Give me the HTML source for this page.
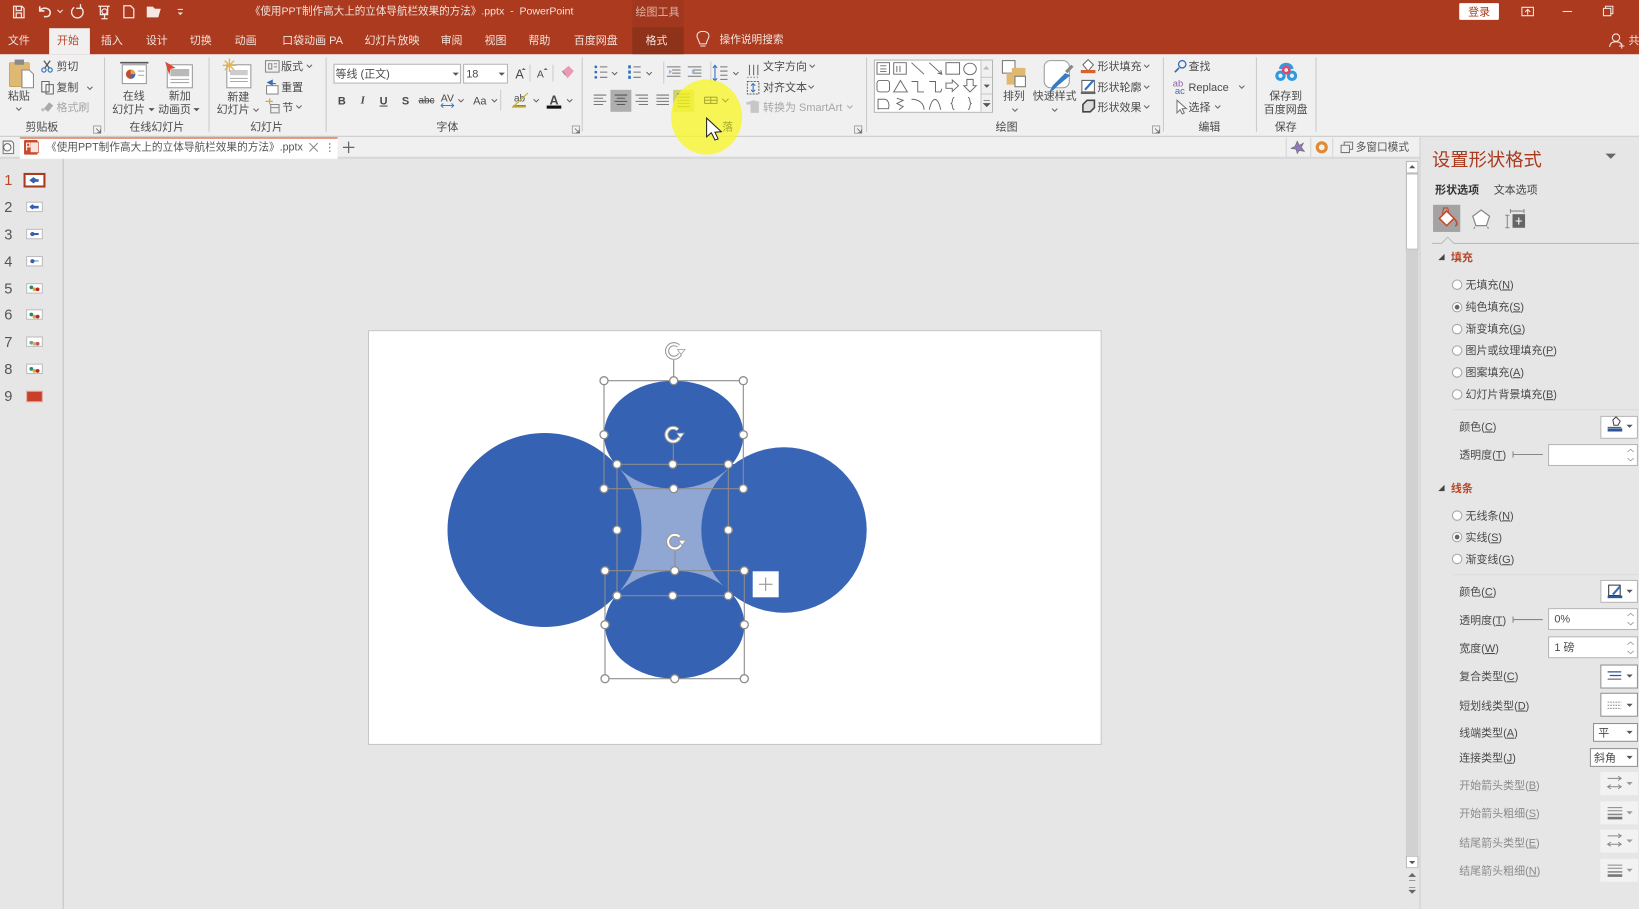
<!DOCTYPE html>
<html lang="zh"><head><meta charset="utf-8"><title>PowerPoint</title>
<style>
html,body{margin:0;padding:0;width:1639px;height:909px;overflow:hidden;background:#e6e6e6}
body{font-family:"Liberation Sans","Noto Sans CJK SC",sans-serif;font-size:10.5px;color:#4a4a4a}
#r{position:absolute;left:0;top:0;width:1568px;height:870px;transform:scale(1.04528,1.04483);transform-origin:0 0;overflow:hidden;filter:blur(.35px)}
.b{position:absolute}
.t{position:absolute;white-space:nowrap;line-height:14px;height:14px;margin-top:-6.5px}
.c{transform:translateX(-50%)}
.w{color:#f3e3dd}
.g{color:#a6a6a6}
.m{color:#8a8a8a}
.u{text-decoration:underline}
.inp{position:absolute;background:#fff;border:1px solid #b5b5b5;box-sizing:border-box}
.num{font-size:14px;color:#555}
svg{position:absolute;left:0;top:0;overflow:visible}
</style></head><body>
<div id="r">
<!-- backgrounds -->
<div class="b" style="left:0;top:0;width:1568px;height:52px;background:#ab3a1f"></div>
<div class="b" style="left:605px;top:0;width:49px;height:52px;background:#a0371e"></div>
<div class="b" style="left:605px;top:26px;width:49px;height:26px;background:#8e3319"></div>
<div class="b" style="left:47px;top:27px;width:39px;height:25px;background:#f0f0f0"></div>
<div class="b" style="left:0;top:52px;width:1568px;height:78px;background:#f0f0f0"></div>
<div class="b" style="left:0;top:130px;width:1568px;height:1px;background:#c9c9c9"></div>
<div class="b" style="left:0;top:131px;width:1568px;height:20px;background:#f0f0f0"></div>
<div class="b" style="left:0;top:150px;width:1360px;height:2px;background:#d8d8d8"></div>
<div class="b" style="left:19px;top:131px;width:304px;height:21px;background:#fff;border-top:2px solid #e09a80;box-sizing:border-box"></div>
<div class="b" style="left:60px;top:152px;width:1px;height:718px;background:#c4c4c4"></div>
<div class="b" style="left:1345px;top:154px;width:12px;height:716px;background:#d1d1d1"></div>
<div class="b" style="left:1345px;top:166px;width:12px;height:73px;background:#fff;border:1px solid #b9b9b9;box-sizing:border-box"></div>
<div class="b" style="left:1345px;top:154px;width:12px;height:12px;background:#fff;border:1px solid #b9b9b9;box-sizing:border-box"></div>
<div class="b" style="left:1345px;top:819px;width:12px;height:12px;background:#fff;border:1px solid #b9b9b9;box-sizing:border-box"></div>
<div class="b" style="left:1345px;top:831px;width:12px;height:39px;background:#e6e6e6"></div>
<div class="b" style="left:1358px;top:131px;width:210px;height:739px;background:#e6e6e6;border-left:1px solid #d0d0d0;box-sizing:border-box"></div>

<!-- title bar text -->
<div class="t w" style="left:239px;top:11px;font-size:10.1px">《使用PPT制作高大上的立体导航栏效果的方法》.pptx&nbsp; -&nbsp; PowerPoint</div>
<div class="t c" style="left:629px;top:11px;color:#e2b3a4">绘图工具</div>
<div class="b" style="left:1396px;top:3px;width:38px;height:16px;background:#fff;border-radius:1px"></div>
<div class="t c" style="left:1415px;top:11.500px;color:#a93a1e">登录</div>
<div class="t w" style="left:1558px;top:38px">共享</div>

<!-- tabs -->
<div class="t c w" style="left:18px;top:38px">文件</div>
<div class="t c" style="left:65px;top:38px;color:#b7472a">开始</div>
<div class="t c w" style="left:107px;top:38px">插入</div>
<div class="t c w" style="left:150px;top:38px">设计</div>
<div class="t c w" style="left:192px;top:38px">切换</div>
<div class="t c w" style="left:235px;top:38px">动画</div>
<div class="t c w" style="left:299px;top:38px">口袋动画 PA</div>
<div class="t c w" style="left:375px;top:38px">幻灯片放映</div>
<div class="t c w" style="left:432px;top:38px">审阅</div>
<div class="t c w" style="left:474px;top:38px">视图</div>
<div class="t c w" style="left:516px;top:38px">帮助</div>
<div class="t c w" style="left:570px;top:38px">百度网盘</div>
<div class="t c w" style="left:628px;top:38px">格式</div>
<div class="t c w" style="left:719px;top:38px;font-size:10.2px">操作说明搜索</div>

<!-- clipboard -->
<div class="t c" style="left:18px;top:91px">粘贴</div>
<div class="t" style="left:54px;top:63px">剪切</div>
<div class="t" style="left:54px;top:83px">复制</div>
<div class="t g" style="left:54px;top:102px">格式刷</div>
<div class="t c" style="left:128px;top:91px">在线</div>
<div class="t c" style="left:123px;top:104px">幻灯片</div>
<div class="t c" style="left:172px;top:91px">新加</div>
<div class="t c" style="left:167px;top:104px">动画页</div>
<div class="t c" style="left:228px;top:92px">新建</div>
<div class="t c" style="left:223px;top:104px">幻灯片</div>
<div class="t" style="left:269px;top:63px">版式</div>
<div class="t" style="left:269px;top:83px">重置</div>
<div class="t" style="left:270px;top:102px">节</div>
<div class="inp" style="left:319px;top:61px;width:122px;height:19px"></div>
<div class="inp" style="left:443px;top:61px;width:43px;height:19px"></div>
<div class="t" style="left:321px;top:70px">等线 (正文)</div>
<div class="t" style="left:446px;top:70px">18</div>
<div class="t c" style="left:327px;top:96px;font-weight:bold">B</div>
<div class="t c" style="left:347px;top:96px;font-style:italic;font-family:'Liberation Serif',serif;font-weight:bold">I</div>
<div class="t c u" style="left:367px;top:96px;font-weight:bold">U</div>
<div class="t c" style="left:388px;top:96px;font-weight:bold">S</div>
<div class="t c" style="left:408px;top:96px;text-decoration:line-through;font-size:9.5px">abc</div>
<div class="t c" style="left:428px;top:94px;font-size:10px">AV</div>
<div class="t c" style="left:459px;top:96px">Aa</div>
<div class="t c" style="left:497px;top:70px;font-size:12px">A</div>
<div class="t c" style="left:517px;top:71px;font-size:10px">A</div>
<div class="t c" style="left:497px;top:94px;font-size:9.5px">ab</div>
<div class="t c" style="left:530px;top:95px;font-weight:bold;font-size:12px">A</div>

<!-- paragraph -->
<div class="t" style="left:730px;top:63px">文字方向</div>
<div class="t" style="left:730px;top:83px">对齐文本</div>
<div class="t g" style="left:730px;top:102px">转换为 SmartArt</div>
<div class="b" style="left:584px;top:86px;width:20px;height:21px;background:#aeaeae"></div>
<div class="b" style="left:644px;top:86px;width:20px;height:21px;background:#cfd06a"></div>

<!-- drawing -->
<div class="b" style="left:836px;top:57px;width:114px;height:51px;background:#fff;border:1px solid #b5b5b5;box-sizing:border-box"></div>
<div class="b" style="left:938px;top:58px;width:11px;height:49px;background:#f0f0f0;border-left:1px solid #c5c5c5;box-sizing:border-box"></div>
<div class="t c" style="left:970px;top:91px">排列</div>
<div class="t c" style="left:1009px;top:91px">快速样式</div>
<div class="t" style="left:1050px;top:63px">形状填充</div>
<div class="t" style="left:1050px;top:83px">形状轮廓</div>
<div class="t" style="left:1050px;top:102px">形状效果</div>

<!-- edit, save -->
<div class="t" style="left:1137px;top:63px">查找</div>
<div class="t" style="left:1137px;top:83px">Replace</div>
<div class="t" style="left:1137px;top:102px">选择</div>
<div class="t c" style="left:1230px;top:91px">保存到</div>
<div class="t c" style="left:1230px;top:104px">百度网盘</div>

<!-- group labels -->
<div class="t c" style="left:40px;top:121px">剪贴板</div>
<div class="t c" style="left:150px;top:121px">在线幻灯片</div>
<div class="t c" style="left:255px;top:121px">幻灯片</div>
<div class="t c" style="left:428px;top:121px">字体</div>
<div class="t c" style="left:963px;top:121px">绘图</div>
<div class="t c" style="left:1157px;top:121px">编辑</div>
<div class="t c" style="left:1230px;top:121px">保存</div>

<!-- doc tab -->
<div class="t" style="left:44px;top:141px;color:#555;font-size:10.2px">《使用PPT制作高大上的立体导航栏效果的方法》.pptx</div>
<div class="t" style="left:1297px;top:141px;color:#555;font-size:10.2px">多窗口模式</div>

<!-- slide numbers -->
<div class="t c num" style="left:8px;top:171px;color:#b7472a">1</div>
<div class="t c num" style="left:8px;top:197px">2</div>
<div class="t c num" style="left:8px;top:223px">3</div>
<div class="t c num" style="left:8px;top:249px">4</div>
<div class="t c num" style="left:8px;top:275px">5</div>
<div class="t c num" style="left:8px;top:300px">6</div>
<div class="t c num" style="left:8px;top:326px">7</div>
<div class="t c num" style="left:8px;top:352px">8</div>
<div class="t c num" style="left:8px;top:378px">9</div>

<!-- right pane -->
<div class="t" style="left:1370px;top:153px;font-size:17.5px;color:#a93a1e;line-height:20px;height:20px;margin-top:-10px">设置形状格式</div>
<div class="t" style="left:1373px;top:181px;font-weight:bold;color:#333">形状选项</div>
<div class="t" style="left:1429px;top:181px;color:#444">文本选项</div>
<div class="b" style="left:1371px;top:196px;width:26px;height:26px;background:#a3a3a3"></div>
<div class="t" style="left:1388px;top:246px;color:#b7472a;font-weight:bold">填充</div>
<div class="t" style="left:1402px;top:272px">无填充(<span class="u">N</span>)</div>
<div class="t" style="left:1402px;top:293px">纯色填充(<span class="u">S</span>)</div>
<div class="t" style="left:1402px;top:314px">渐变填充(<span class="u">G</span>)</div>
<div class="t" style="left:1402px;top:335px">图片或纹理填充(<span class="u">P</span>)</div>
<div class="t" style="left:1402px;top:356px">图案填充(<span class="u">A</span>)</div>
<div class="t" style="left:1402px;top:377px">幻灯片背景填充(<span class="u">B</span>)</div>
<div class="t" style="left:1396px;top:408px">颜色(<span class="u">C</span>)</div>
<div class="t" style="left:1396px;top:435px">透明度(<span class="u">T</span>)</div>
<div class="inp" style="left:1531px;top:398px;width:36px;height:22px;background:#fff"></div>
<div class="inp" style="left:1481px;top:425px;width:86px;height:21px"></div>
<div class="t" style="left:1388px;top:467px;color:#b7472a;font-weight:bold">线条</div>
<div class="t" style="left:1402px;top:493px">无线条(<span class="u">N</span>)</div>
<div class="t" style="left:1402px;top:514px">实线(<span class="u">S</span>)</div>
<div class="t" style="left:1402px;top:535px">渐变线(<span class="u">G</span>)</div>
<div class="t" style="left:1396px;top:566px">颜色(<span class="u">C</span>)</div>
<div class="t" style="left:1396px;top:593px">透明度(<span class="u">T</span>)</div>
<div class="t" style="left:1396px;top:620px">宽度(<span class="u">W</span>)</div>
<div class="t" style="left:1396px;top:647px">复合类型(<span class="u">C</span>)</div>
<div class="t" style="left:1396px;top:675px">短划线类型(<span class="u">D</span>)</div>
<div class="t" style="left:1396px;top:701px">线端类型(<span class="u">A</span>)</div>
<div class="t" style="left:1396px;top:725px">连接类型(<span class="u">J</span>)</div>
<div class="t m" style="left:1396px;top:751px">开始箭头类型(<span class="u">B</span>)</div>
<div class="t m" style="left:1396px;top:778px">开始箭头粗细(<span class="u">S</span>)</div>
<div class="t m" style="left:1396px;top:806px">结尾箭头类型(<span class="u">E</span>)</div>
<div class="t m" style="left:1396px;top:833px">结尾箭头粗细(<span class="u">N</span>)</div>
<div class="inp" style="left:1531px;top:555px;width:36px;height:22px"></div>
<div class="inp" style="left:1481px;top:582px;width:86px;height:21px"></div>
<div class="inp" style="left:1481px;top:609px;width:86px;height:21px"></div>
<div class="inp" style="left:1531px;top:636px;width:36px;height:23px;border-color:#8f8f8f"></div>
<div class="inp" style="left:1531px;top:663px;width:36px;height:23px;border-color:#8f8f8f"></div>
<div class="inp" style="left:1524px;top:692px;width:43px;height:18px;border-color:#8f8f8f"></div>
<div class="inp" style="left:1521px;top:716px;width:46px;height:18px;border-color:#8f8f8f"></div>
<div class="b" style="left:1531px;top:739px;width:36px;height:22px;background:#f2f2f2"></div>
<div class="b" style="left:1531px;top:767px;width:36px;height:22px;background:#f2f2f2"></div>
<div class="b" style="left:1531px;top:794px;width:36px;height:22px;background:#f2f2f2"></div>
<div class="b" style="left:1531px;top:822px;width:36px;height:22px;background:#f2f2f2"></div>
<div class="t" style="left:1487px;top:592px">0%</div>
<div class="t" style="left:1487px;top:619px">1 磅</div>
<div class="t" style="left:1529px;top:701px">平</div>
<div class="t" style="left:1525px;top:725px">斜角</div>

<!-- icons -->
<svg width="1568" height="870" viewBox="0 0 1568 870" fill="none">
<defs>
<path id="ch" d="M-2.5 -1L0 1.5L2.5 -1" stroke="#666" stroke-width="1"/>
<path id="tr" d="M-3 -1.5H3L0 1.5Z" fill="#555"/>
<g id="rad"><circle r="4.5" fill="#fff" stroke="#a5a5a5"/></g>
<g id="rad2"><circle r="4.5" fill="#fff" stroke="#a5a5a5"/><circle r="2.3" fill="#666"/></g>
<g id="spin"><path d="M-3 -3L0 -5.5L3 -3M-3 3L0 5.5L3 3" stroke="#999" stroke-width=".8"/></g>
<g id="arr"><path d="M-7 -5H6M3 -7L6 -5L3 -3M-7 3H6M-4 1L-7 3L-4 5M3 1L6 3L3 5" stroke="#888" stroke-width=".9"/></g>
<g id="thk"><path d="M-7 -5H7M-7 -2H7" stroke="#888"/><path d="M-7 1.5H7" stroke="#888" stroke-width="1.5"/><path d="M-7 5H7" stroke="#777" stroke-width="2.5"/></g>
<g id="sep"><path d="M0 0V71" stroke="#c9c9c9"/></g>
<g id="launch"><path d="M-3.5 -3.5H3.5V3.5H-3.5Z" stroke="#999" stroke-width=".8"/><path d="M-1 -1L3 3M3 0V3H0" stroke="#666" stroke-width=".8"/></g>
</defs>

<!-- title bar icons -->
<g stroke="#f5e8e3" stroke-width="1.2">
<path d="M13 6H21L23 8V17H13ZM15.5 6V10H20.5V6M15.5 17V12.5H20.5V17"/>
<path d="M38 10C42 6 48 8 48 12S45 16 42 16M38 6V10.5H42.5" stroke-width="1.5"/>
<path d="M71 7A5.5 5.5 0 1 0 77 7M77 4V8H73" stroke-width="1.3"/>
<path d="M94 6H105M96 6V14H103V6M97 18H103M100 14V18"/><circle cx="100" cy="11" r="2.5"/>
<path d="M118.500 5.500H125L128 8.500V17H118.500Z"/>
<path d="M141 16V7H146L148 9H153L151 16Z" fill="#f5e8e3"/>
<path d="M170 9H175" stroke-width="1"/>
<path d="M1456 7H1467V15H1456ZM1461.500 14V9.500M1459 11.500L1461.500 9L1464 11.500" stroke-width="1"/>
<path d="M1495 11H1504" stroke-width="1"/>
<path d="M1534 8H1541V15H1534ZM1536 8V6H1543V13H1541" stroke-width="1"/>
</g>
<path d="M170 12H175L172.500 14.500Z" fill="#f5e8e3"/>
<path d="M55 10L57.500 12.500L60 10" stroke="#f5e8e3" transform="translate(0 -.5)"/>
<path d="M668 38C665 33 668 30 672.500 30S680 33 677 38C676 40 676 41 675.500 42H669.500C669 41 669 40 668 38ZM670 44H675" stroke="#f5e8e3"/>
<circle cx="1546" cy="36" r="3.500" stroke="#f5e8e3"/>
<path d="M1540 45C1540 41 1543 40 1546 40S1551 41 1551 43M1549 44H1554M1551.500 41.500V46.500" stroke="#f5e8e3"/>

<!-- separators -->
<use href="#sep" x="100" y="55"/><use href="#sep" x="200" y="55"/><use href="#sep" x="312" y="55"/>
<use href="#sep" x="557" y="55"/><use href="#sep" x="829" y="55"/><use href="#sep" x="1113" y="55"/>
<use href="#sep" x="1202" y="55"/><use href="#sep" x="1259" y="55"/>
<use href="#launch" x="93" y="124"/><use href="#launch" x="551" y="124"/><use href="#launch" x="821" y="124"/><use href="#launch" x="1106" y="124"/>

<!-- clipboard icons -->
<rect x="9" y="60" width="19" height="23" rx="1" fill="#dfb871" stroke="#b79655" stroke-width=".6"/>
<rect x="14" y="57" width="9" height="5" fill="#8a8a8a"/>
<path d="M21 67H28L32 71V84H21Z" fill="#fff" stroke="#888"/>
<use href="#ch" x="18" y="104"/>
<circle cx="42" cy="67" r="2" stroke="#3b7bbf" stroke-width="1.2"/><circle cx="48" cy="67" r="2" stroke="#3b7bbf" stroke-width="1.200"/>
<path d="M43 65L48 58M47 65L42 58" stroke="#555" stroke-width="1.2"/>
<path d="M40 78H47V88H40ZM44 81H51V90H44Z" stroke="#666" fill="#f7f7f7"/>
<use href="#ch" x="86" y="84"/>
<path d="M42 104L47 98L51 101L46 107Z" fill="#aaa"/><circle cx="41" cy="105" r="1.500" fill="#bbb"/>
<!-- online slides -->
<path d="M115 60H142" stroke="#555" stroke-width="1.500"/>
<rect x="117" y="62" width="23" height="18" fill="#fff" stroke="#999"/>
<circle cx="125" cy="71" r="4.500" fill="#c8492b"/><path d="M125 71V66.500A4.500 4.500 0 0 1 129.500 71Z" fill="#e8a33d"/><path d="M125 71H129.500A4.500 4.500 0 0 1 125 75.500Z" fill="#3a6fb5"/>
<path d="M132 68H138M132 72H138" stroke="#aaa"/>
<use href="#tr" x="145" y="105"/>
<rect x="160" y="62" width="24" height="22" fill="#fff" stroke="#999"/>
<rect x="163" y="66" width="18" height="7" fill="#b9b9b9"/><path d="M163 76H181M163 79H181" stroke="#aaa"/>
<path d="M158 59L168 65L163 66L162 72Z" fill="#d94a33"/>
<use href="#tr" x="188" y="105"/>
<!-- new slide -->
<rect x="217" y="62" width="23" height="22" fill="#fff" stroke="#999"/>
<rect x="220" y="67" width="17" height="5" fill="#ccc"/><path d="M220 75H237M220 78H237" stroke="#aaa"/>
<path d="M215 58L224 67M224 58L215 67M219.500 56V69M213 62.500H226" stroke="#e3b64b" stroke-width="1.300"/>
<use href="#ch" x="245" y="105"/>
<path d="M254 58H267V69H254ZM257 61H260V66H257ZM262 61H265M262 64H265" stroke="#888"/><use href="#ch" x="296" y="63"/>
<rect x="255" y="82" width="11" height="8" stroke="#888" fill="#fff"/><path d="M255 79L261 76V82Z" fill="#3a6fb5"/><path d="M258 80H264" stroke="#3a6fb5"/>
<path d="M254 97L261 97M258 94V100" stroke="#e0a33d" stroke-width="1.200"/><path d="M259 100H267V108H259ZM259 103H267" stroke="#888"/><use href="#ch" x="286" y="102"/>
<!-- font chevrons -->
<use href="#tr" x="436" y="71"/><use href="#tr" x="480" y="71"/>
<path d="M501 65L503 67H499ZM522 65L520 67H524Z" fill="#3a6fb5"/>
<path d="M507 62V78" stroke="#ccc"/><path d="M529 62V78" stroke="#ccc"/>
<path d="M538 68L544 63L549 68L543 75Z" fill="#e79bb5"/><path d="M538 68L541 72" stroke="#888"/>
<path d="M423 101H433M424 99L422 101L424 103M432 99L434 101L432 103" stroke="#2d7dc3"/>
<use href="#ch" x="441" y="96"/><use href="#ch" x="473" y="96"/><use href="#ch" x="513" y="96"/><use href="#ch" x="545" y="96"/>
<path d="M479 86V106" stroke="#ccc"/>
<path d="M491 101H503" stroke="#666"/><path d="M490 103L505 89" stroke="#c9b73a" stroke-width="1.200"/><rect x="491" y="101" width="12" height="2" fill="#bda52f"/>
<rect x="523" y="101" width="14" height="3" fill="#111"/>
<!-- paragraph icons -->
<g stroke="#777" stroke-width="1">
<path d="M574 64H581M574 69H581M574 74H581"/><path d="M606 64H613M606 69H613M606 74H613"/>
<path d="M638 64H651M643 67H651M643 70H651M638 73H651M648 70H651"/>
<path d="M658 64H671M663 67H671M663 70H671M658 73H671"/>
<path d="M689 64H696M689 68H696M689 72H696M689 76H696"/>
<path d="M568 91H580M568 94H577M568 97H580M568 100H577"/>
<path d="M588 91H600M590 94H598M588 97H600M590 100H598" stroke="#555"/>
<path d="M608 91H620M611 94H620M608 97H620M611 100H620"/>
<path d="M628 91H640M628 94H640M628 97H640M628 100H640"/>
<path d="M648 90H660M648 93H660M648 96H660M648 99H660M648 102H660" stroke="#6f6f20"/>
</g>
<g fill="#2d6fc0"><circle cx="570" cy="64" r="1.300"/><circle cx="570" cy="69" r="1.300"/><circle cx="570" cy="74" r="1.300"/><rect x="601" y="62.500" width="2.500" height="3"/><rect x="601" y="67.500" width="2.500" height="3"/><rect x="601" y="72.500" width="2.500" height="3"/></g>
<use href="#ch" x="588" y="70"/><use href="#ch" x="621" y="70"/><use href="#ch" x="704" y="70"/>
<path d="M641 68.500L637 68.500M643 68.500L640 66.500V71ZM662 66.500L665 68.500L662 71Z" fill="#9bb9d9"/>
<path d="M684 63V77M682 65L684 62.500L686 65M682 75L684 77.500L686 75" stroke="#2d6fc0"/>
<path d="M635 59V80" stroke="#ccc"/><path d="M680 59V80" stroke="#ccc"/>
<path d="M717 62V72M721 62V72M725 62V72" stroke="#666"/><path d="M715 74H727" stroke="#666" stroke-dasharray="1 2"/><use href="#ch" x="777" y="63"/>
<path d="M715 78H726V90H715Z" stroke="#666" stroke-dasharray="2 1"/><path d="M720.500 80V88M718.500 82L720.500 80L722.500 82M718.500 86L720.500 88L722.500 86" stroke="#3a6fb5"/><use href="#ch" x="776" y="83"/>
<path d="M714 98L721 96L728 98H726V108H718V100L714 100Z" fill="#c6c6c6"/><use href="#ch" x="813" y="102" opacity=".5"/>
<!-- spotlight -->
<ellipse cx="676" cy="112" rx="34" ry="36" fill="#f7f62e" opacity=".8"/>
<path d="M676 113V131L680.500 127L684 134L687 133L684 126.500L690 126Z" fill="#fff" stroke="#222" stroke-width="1"/>
<path d="M674 93H686M674 96H686M674 99H686M674 93V99M686 93V99M680 93V99" stroke="#adad35"/><path d="M692 95L695 98L698 95" stroke="#adad35" transform="translate(-1 -.5)"/>
<text x="691" y="125" font-size="10.500" fill="#a8a82e" font-family="Liberation Sans,Noto Sans CJK SC,sans-serif">落</text>
<!-- shapes gallery -->
<g stroke="#666" stroke-width=".9">
<path d="M839 60H851V71H839ZM842 63H848M842 66H848M842 68.500H848"/>
<path d="M855 60H867V71H855ZM858 63V69M861 63V69"/>
<path d="M872 60L884 71M889 60L901 71"/><path d="M897 70L901 71L900 67"/>
<rect x="905" y="60" width="13" height="11"/><ellipse cx="928" cy="66" rx="6" ry="5.500"/>
<rect x="839" y="77" width="12" height="11" rx="2.500"/>
<path d="M861.500 77L868 88H855Z"/><path d="M872 78H878V88H884M889 78H895V88H900L901 85"/>
<path d="M905 79.500H911V76.500L917 82L911 87.500V84.500H905Z"/>
<path d="M925 76H931V82H934L928 88L922 82H925Z"/>
<path d="M840 105V95H846C850 95 851 100 850 104H840Z"/>
<path d="M858 94L864 96L858 99L864 102L860 105"/><path d="M872 95C879 95 884 99 884 105"/><path d="M889 105C892 92 897 92 900 105"/>
<path d="M913 93C910 94 912 98 910 99C912 100 910 104 913 105M926 93C929 94 927 98 929 99C927 100 929 104 926 105"/>
</g>
<path d="M940.500 66.500L943.500 63L946.500 66.500Z" fill="#bbb"/><path d="M941 81H947L944 84Z" fill="#555"/><path d="M941 96H947M941 99H947L944 102Z" stroke="#555" fill="#555" stroke-width=".7"/>
<path d="M939 74H949M939 90H949" stroke="#c9c9c9"/>
<!-- arrange, quick style -->
<rect x="959" y="58" width="12" height="12" fill="#fff" stroke="#777"/>
<rect x="968" y="65" width="13" height="12" fill="#dfb871"/><rect x="963" y="70" width="11" height="11" fill="#dfb871"/><rect x="971" y="73" width="10" height="10" fill="#fff" stroke="#777"/>
<use href="#ch" x="971" y="105"/>
<rect x="999" y="58" width="24" height="26" rx="6" fill="#fff" stroke="#9a9a9a"/>
<path d="M1024 72L1012 82L1008 86L1004 88L1007 82L1019 70Z" fill="#3a7bc0"/><path d="M1020 69L1026 63" stroke="#888" stroke-width="3"/>
<use href="#ch" x="1009" y="105"/>
<path d="M1036 62L1041 57L1046 62L1041 68Z" stroke="#666" fill="#fff"/><rect x="1034" y="67" width="14" height="3" fill="#d9622c"/>
<path d="M1035 77H1047V88H1035Z" stroke="#666" fill="#fff"/><path d="M1038 86L1046 77" stroke="#2d6fc0" stroke-width="2"/><rect x="1034" y="88" width="14" height="2" fill="#666"/>
<path d="M1036 100L1040 96H1047V103L1043 107H1036Z" fill="#ddd" stroke="#444" stroke-width="1.500"/>
<use href="#ch" x="1097" y="63"/><use href="#ch" x="1097" y="83"/><use href="#ch" x="1097" y="102"/>
<!-- edit -->
<circle cx="1131" cy="61.500" r="3.500" stroke="#3a6fb5" stroke-width="1.300"/><path d="M1128 65L1124 69" stroke="#3a6fb5" stroke-width="1.700"/>
<text x="1122" y="83" font-size="9" fill="#8d5fb0" font-family="Liberation Sans,sans-serif">ab</text><text x="1124" y="90" font-size="9" fill="#3a6fb5" font-family="Liberation Sans,sans-serif">ac</text>
<use href="#ch" x="1188" y="83"/>
<path d="M1126 96V108L1129 105L1131 109L1133 108L1131 104H1135Z" stroke="#777" fill="#fff"/><use href="#ch" x="1165" y="102"/>
<!-- baidu -->
<circle cx="1225" cy="72.500" r="3.500" stroke="#2f9ae0" stroke-width="3"/><circle cx="1236" cy="72.500" r="3.500" stroke="#2f9ae0" stroke-width="3"/>
<path d="M1225 66C1226 60 1235 60 1236 66" stroke="#2f9ae0" stroke-width="3"/>
<circle cx="1230.500" cy="67" r="3" stroke="#e0486a" stroke-width="2.500"/>
<!-- tab bar -->
<path d="M3 135H11L13 137V147H3Z" stroke="#777" fill="#f5f5f5"/><circle cx="7" cy="141" r="3.500" stroke="#666" fill="#fff"/>
<rect x="23" y="134" width="13" height="14" rx="1" fill="#c8492b"/><rect x="29" y="136" width="8" height="10" fill="#f6e5df" stroke="#c8492b" stroke-width=".6"/>
<path d="M25.500 144V137H28.500V140.500H25.500" stroke="#fff"/>
<path d="M296 137L304 145M304 137L296 145" stroke="#888"/>
<path d="M315.500 137V138.500M315.500 140.500V142M315.500 144V145.500" stroke="#666"/>
<path d="M328 141H339M333.500 135.500V146.500" stroke="#666" stroke-width="1.200"/>
<path d="M1230.500 132V150M1254 132V150M1275 132V150" stroke="#d4d4d4"/>
<path d="M1241 135L1243 139L1247 137L1245 141L1248 145L1243 144L1241 147L1240 143L1235 142L1239 140Z" fill="#9179b8" stroke="#666" stroke-width=".5"/>
<circle cx="1264.500" cy="141" r="4.300" stroke="#e08a33" stroke-width="3"/>
<path d="M1283 139H1291V146H1283ZM1286 139V136H1294V143H1291" stroke="#777"/>
<!-- scrollbar -->
<path d="M1348 161L1351 158L1354 161Z" fill="#555"/><path d="M1348 824H1354L1351 827Z" fill="#555"/>
<path d="M1348 839L1351 836L1354 839ZM1348 842.500H1354" fill="#666" stroke="#666" stroke-width=".6"/>
<path d="M1348 849.500H1354M1348 852L1351 855L1354 852Z" fill="#666" stroke="#666" stroke-width=".6"/>
<!-- thumbs -->
<rect x="23.500" y="166.500" width="19" height="12" fill="#fff" stroke="#ab3a1f" stroke-width="2"/>
<g fill="#fff" stroke="#bdbdbd"><rect x="25.500" y="193.500" width="15" height="9"/><rect x="25.500" y="219.500" width="15" height="9"/><rect x="25.500" y="245.500" width="15" height="9"/><rect x="25.500" y="271.500" width="15" height="9"/><rect x="25.500" y="296.500" width="15" height="9"/><rect x="25.500" y="322.500" width="15" height="9"/><rect x="25.500" y="348.500" width="15" height="9"/></g>
<g fill="#3560b0"><path d="M28 172.500L32 169.500L36 172.500L32 175.500Z"/><rect x="31" y="171.500" width="6" height="2.500"/><path d="M28 198L31 195.500L34 198L31 200.500Z"/><rect x="31" y="197" width="6" height="2.500"/><circle cx="31" cy="224" r="2"/><rect x="29" y="223" width="8" height="2"/><circle cx="31" cy="250" r="2"/><rect x="31" y="249" width="6" height="1.500" opacity=".5"/></g>
<g><circle cx="30" cy="275" r="1.800" fill="#1d8a7a"/><circle cx="33" cy="277" r="1.800" fill="#e3a52f"/><circle cx="36" cy="277" r="1.800" fill="#b7272a"/>
<circle cx="30" cy="301" r="1.800" fill="#1d8a7a"/><circle cx="33" cy="303" r="1.800" fill="#e3a52f"/><circle cx="36" cy="303" r="1.800" fill="#b7272a"/>
<circle cx="30" cy="328" r="1.800" fill="#5fa89d"/><circle cx="33" cy="329" r="1.800" fill="#e3b05f"/><circle cx="36" cy="329" r="1.800" fill="#b75a5a"/>
<circle cx="30" cy="353" r="1.800" fill="#1d8a7a"/><circle cx="33" cy="355" r="1.800" fill="#e3a52f"/><circle cx="36" cy="355" r="1.800" fill="#b7272a"/></g>
<rect x="25.500" y="374.500" width="15" height="10" fill="#c9402a" stroke="#e2a89c"/>
<!-- pane icons -->
<path d="M1546 148H1536L1541 153Z" transform="translate(0 -1)" fill="#666"/>
<path d="M1377 209L1384 202L1391 209L1384 216Z" fill="#fff" stroke="#c8492b" stroke-width="1.500"/>
<path d="M1380 205L1381 199H1385L1386 203" stroke="#c8492b"/>
<path d="M1391 209C1394 212 1395 216 1392 216" stroke="#c8492b" stroke-width="1.500"/>
<path d="M1417 201L1425 207L1422 216H1412L1409 207Z" fill="#fff" stroke="#888" stroke-width="1.200"/><path d="M1411 217L1410 219M1423 217L1424 219" stroke="#888"/>
<rect x="1447" y="205" width="12" height="13" fill="#666"/>
<path d="M1445 202H1458M1445 200V204M1458 200V204M1442 206V218M1440 206H1444M1440 218H1444" stroke="#888"/>
<path d="M1453 208V215M1450 211.500H1456" stroke="#fff"/>
<path d="M1370 233H1379L1385 227L1391 233H1568" stroke="#bcbcbc"/>
<path d="M1376 249H1382V243Z" fill="#444"/><path d="M1376 470H1382V464Z" fill="#444"/>
<use href="#rad" x="1394" y="272.500"/><use href="#rad2" x="1394" y="294"/><use href="#rad" x="1394" y="315"/><use href="#rad" x="1394" y="335.500"/><use href="#rad" x="1394" y="356.500"/><use href="#rad" x="1394" y="377.500"/>
<use href="#rad" x="1394" y="493.500"/><use href="#rad2" x="1394" y="514"/><use href="#rad" x="1394" y="535"/>
<path d="M1390 392H1568M1390 550H1568" stroke="#dcdcdc"/>
<path d="M1447.500 432V438M1448 435H1476" stroke="#888"/><path d="M1447.500 590V596M1448 593H1476" stroke="#888"/>
<use href="#spin" x="1560" y="435.500"/><use href="#spin" x="1560" y="592.500"/><use href="#spin" x="1560" y="620"/>
<path d="M1543 402L1546 399L1550 403L1548 407H1544ZM1538 409H1551" stroke="#444" fill="#fff"/><rect x="1538" y="410" width="14" height="3" fill="#2f5597"/><use href="#tr" x="1559" y="408"/>
<path d="M1539 560H1550V570H1539Z" stroke="#333" fill="#fff"/><path d="M1543 569L1550 561" stroke="#2d6fc0" stroke-width="2"/><rect x="1538" y="570" width="14" height="2.500" fill="#2f5597"/><use href="#tr" x="1559" y="566"/>
<path d="M1538 643H1551M1540 646.500H1551" stroke="#2f5597" stroke-width="1.200"/><path d="M1538 650H1551" stroke="#555"/><use href="#tr" x="1559" y="647"/>
<path d="M1538 672H1551M1538 675H1551M1538 678H1551" stroke="#888" stroke-dasharray="1.500 1"/><use href="#tr" x="1559" y="675"/>
<use href="#tr" x="1559" y="701"/><use href="#tr" x="1559" y="725"/>
<use href="#arr" x="1545" y="750"/><use href="#thk" x="1545" y="778"/><use href="#arr" x="1545" y="805"/><use href="#thk" x="1545" y="833"/>
<g opacity=".55"><use href="#tr" x="1559" y="750"/><use href="#tr" x="1559" y="778"/><use href="#tr" x="1559" y="805"/><use href="#tr" x="1559" y="833"/></g>
</svg>

<!-- slide -->
<div class="b" style="left:352px;top:316px;width:702px;height:397px;background:#fff;border:1px solid #c6c6c6;box-sizing:border-box"></div>
</div>

<!-- slide shapes, real pixel coords -->
<svg width="1639" height="909" viewBox="0 0 1639 909" fill="none" style="filter:blur(.25px)">
<defs>
<g id="h"><circle r="4" fill="#fff" stroke="#8c8c8c" stroke-width="1.300"/></g>
<g id="rot"><path d="M6 3A6.800 6.800 0 1 1 4.500 -5" stroke="#9a9a9a" stroke-width="4.200" fill="none"/><path d="M6 3A6.800 6.800 0 1 1 4.500 -5" stroke="#fff" stroke-width="2" fill="none"/><path d="M3.500 -1.500H11L7 3.500Z" fill="#fff" stroke="#9a9a9a" stroke-width=".8"/></g>
</defs>
<rect x="612" y="464" width="124" height="132" fill="#3562b3"/>
<rect x="620" y="468" width="107" height="122" fill="#8fa7d2"/>
<circle cx="544.500" cy="530" r="97" fill="#3562b3"/>
<circle cx="784" cy="530" r="82.700" fill="#3865b6"/>
<ellipse cx="673.700" cy="434.700" rx="69.700" ry="54" fill="#3562b3"/>
<ellipse cx="674.700" cy="624.700" rx="69.700" ry="54" fill="#3562b3"/>
<g stroke="#8c8c8c" stroke-width="1.100">
<rect x="604" y="380.700" width="139.300" height="108"/>
<rect x="605" y="570.700" width="139.300" height="108"/>
<rect x="617" y="464.300" width="111.300" height="131.400"/>
<path d="M673.700 360V380.700M673.300 444V464.300M675 551V570.700"/>
</g>
<rect x="752.700" y="571.300" width="26" height="26" fill="#fff"/>
<path d="M759 584.300H772.500M765.700 577.500V591" stroke="#8c8c8c"/>
<use href="#rot" x="674" y="351"/><use href="#rot" x="673.300" y="434.700"/><use href="#rot" x="675" y="541.700"/>
<use href="#h" x="604" y="380.700"/><use href="#h" x="673.700" y="380.700"/><use href="#h" x="743.300" y="380.700"/>
<use href="#h" x="604" y="434.700"/><use href="#h" x="743.300" y="434.700"/>
<use href="#h" x="604" y="488.700"/><use href="#h" x="673.700" y="488.700"/><use href="#h" x="743.300" y="488.700"/>
<use href="#h" x="617" y="464.300"/><use href="#h" x="672.700" y="464.300"/><use href="#h" x="728.300" y="464.300"/>
<use href="#h" x="617" y="530"/><use href="#h" x="728.300" y="530"/>
<use href="#h" x="617" y="595.700"/><use href="#h" x="672.700" y="595.700"/><use href="#h" x="728.300" y="595.700"/>
<use href="#h" x="605" y="570.700"/><use href="#h" x="674.700" y="570.700"/><use href="#h" x="744.300" y="570.700"/>
<use href="#h" x="605" y="624.700"/><use href="#h" x="744.300" y="624.700"/>
<use href="#h" x="605" y="678.700"/><use href="#h" x="674.700" y="678.700"/><use href="#h" x="744.300" y="678.700"/>
</svg>
</body></html>
